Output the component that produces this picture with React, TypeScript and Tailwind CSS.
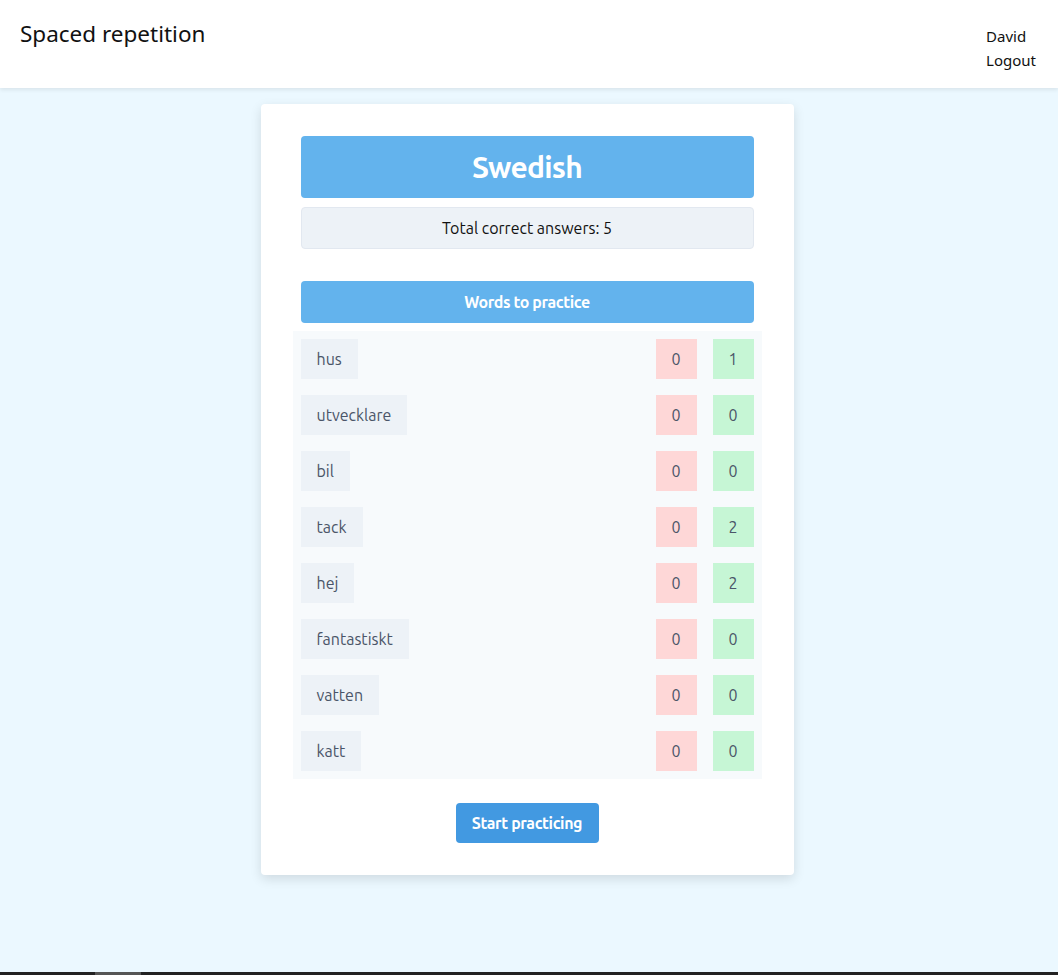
import React from "react";

interface Word {
  id: number;
  text: string;
  incorrect: number;
  correct: number;
}

const words: Word[] = [
  { id: 1, text: "hus", incorrect: 0, correct: 1 },
  { id: 2, text: "utvecklare", incorrect: 0, correct: 0 },
  { id: 3, text: "bil", incorrect: 0, correct: 0 },
  { id: 4, text: "tack", incorrect: 0, correct: 2 },
  { id: 5, text: "hej", incorrect: 0, correct: 2 },
  { id: 6, text: "fantastiskt", incorrect: 0, correct: 0 },
  { id: 7, text: "vatten", incorrect: 0, correct: 0 },
  { id: 8, text: "katt", incorrect: 0, correct: 0 },
];

function Header() {
  return (
    <header className="h-[88px] bg-white shadow-[0_2px_4px_rgba(0,0,0,0.08)] flex justify-between font-['Noto_Sans',sans-serif] text-[#111]">
      <h1 className="pl-5 pt-[16px] text-[22.5px] leading-[36px]">Spaced repetition</h1>
      <nav className="pr-[22px] pt-6 text-[15px] leading-6 flex flex-col items-start">
        <span>David</span>
        <a href="#">Logout</a>
      </nav>
    </header>
  );
}

export default function App() {
  const totalCorrect = words.reduce((sum, w) => sum + w.correct, 0);

  return (
    <div className="min-h-screen flex flex-col bg-[#ebf8ff] font-['Ubuntu','Noto_Sans',sans-serif]">
      <Header />

      <main className="flex-1 pt-4 pr-1">
        <div className="w-[533px] mx-auto bg-white rounded shadow-[0_4px_12px_rgba(0,0,0,0.12)] px-10 pt-8 pb-8">
          {/* Deck title */}
          <div className="h-[62px] bg-[#63b3ed] rounded flex items-center justify-center">
            <h2 className="text-[30px] font-bold text-white tracking-tight">Swedish</h2>
          </div>
          <div className="mt-[9px] h-[42px] bg-[#edf2f7] border border-[#e2e8f0] rounded flex items-center justify-center text-base text-[#111]">
            Total correct answers: {totalCorrect}
          </div>

          {/* Word list */}
          <div className="mt-8 h-[42px] bg-[#63b3ed] rounded flex items-center justify-center text-white font-bold text-base tracking-tight">
            Words to practice
          </div>
          <ul className="-mx-2 mt-2 bg-[#f7fafc] p-2 flex flex-col gap-4">
            {words.map((word) => (
              <li key={word.id} className="flex items-center gap-4 h-10 text-base text-[#4a5568]">
                <span className="h-10 px-4 bg-[#edf2f7] flex items-center">{word.text}</span>
                <span className="ml-auto w-[41px] h-10 bg-[#fed7d7] flex items-center justify-center">
                  {word.incorrect}
                </span>
                <span className="w-[41px] h-10 bg-[#c6f6d5] flex items-center justify-center">
                  {word.correct}
                </span>
              </li>
            ))}
          </ul>

          <div className="mt-6 flex justify-center">
            <button className="w-[143px] h-10 bg-[#4299e1] rounded text-white font-bold text-base tracking-tight">
              Start practicing
            </button>
          </div>
        </div>
      </main>

      <div className="h-[3px] bg-[#222] flex">
        <div className="ml-[95px] w-[46px] bg-[#555]"></div>
      </div>
    </div>
  );
}
